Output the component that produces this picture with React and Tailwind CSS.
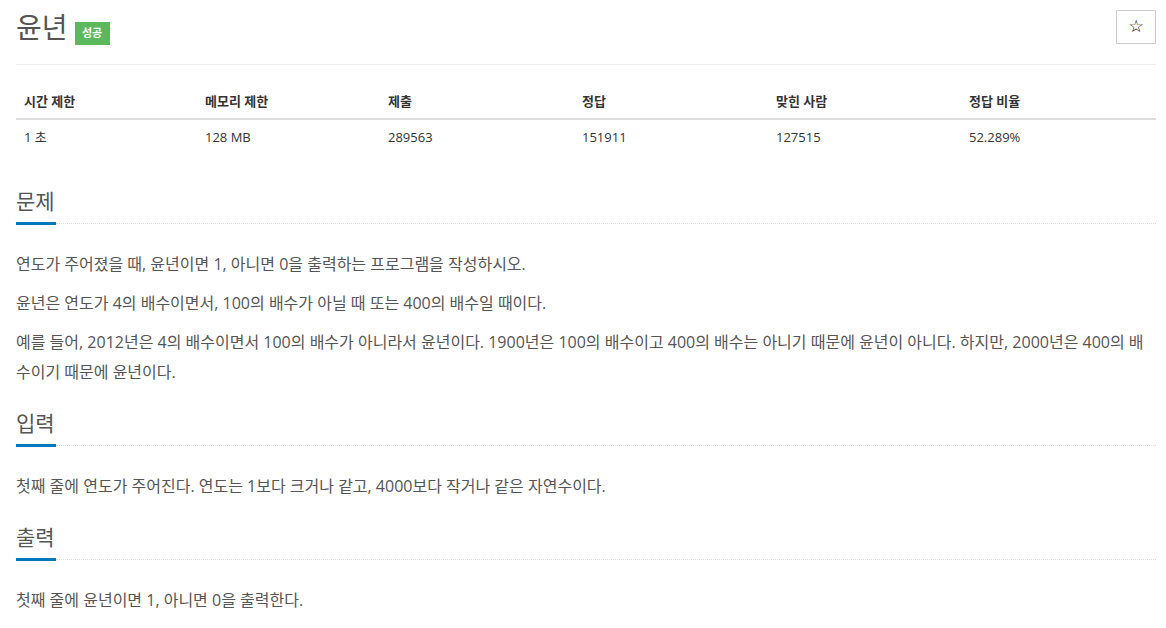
import { useState } from "react";

const limits = [
  { label: "시간 제한", value: "1 초", w: "w-[181px]" },
  { label: "메모리 제한", value: "128 MB", w: "w-[183px]" },
  { label: "제출", value: "289563", w: "w-[194px]" },
  { label: "정답", value: "151911", w: "w-[194px]" },
  { label: "맞힌 사람", value: "127515", w: "w-[193px]" },
  { label: "정답 비율", value: "52.289%", w: "" },
];

// Section title with the short blue bar and dotted rule
const Headline = ({ title }) => (
  <div>
    <h2 className="text-[21px] leading-[30px] text-[#555] pb-[6px]">{title}</h2>
    <div className="flex items-center h-[3px]">
      <div className="w-10 h-[3px] bg-[#0076c0]" />
      <div className="flex-1 border-t border-dotted border-[#ddd]" />
    </div>
  </div>
);

const Section = ({ title, children }) => (
  <section className="mt-3">
    <Headline title={title} />
    <div className="mt-[24px] text-[16px] leading-[30px] text-[#555]">{children}</div>
  </section>
);

export default function App() {
  const [starred, setStarred] = useState(false);

  return (
    <div className="min-h-screen bg-white pl-4 pr-[10px] flex flex-col font-['Open_Sans','Noto_Sans_CJK_KR',sans-serif]">
      {/* page header */}
      <div className="h-[65px] pt-[10px] border-b border-[#eee] flex justify-between items-start">
        <div className="flex items-start">
          <h1 className="text-[28px] leading-[34px] text-[#555]">윤년</h1>
          <span className="ml-[7px] mt-[12px] h-[23px] w-[35px] bg-[#5cb85c] text-white text-[11px] font-bold flex items-center justify-center">
            성공
          </span>
        </div>
        <button
          onClick={() => setStarred(!starred)}
          className="w-10 h-[34px] border border-[#ccc] bg-white flex items-center justify-center text-[17px] text-black font-['DejaVu_Sans',sans-serif]"
        >
          {starred ? "★" : "☆"}
        </button>
      </div>

      {/* limits table */}
      <table className="mt-[19px] mb-5 w-full border-collapse text-[13px] text-[#333]">
        <thead>
          <tr>
            {limits.map((item) => (
              <th
                key={item.label}
                className={`${item.w} text-left font-bold px-2 py-2 leading-[18px] border-b-2 border-[#ddd]`}
              >
                {item.label}
              </th>
            ))}
          </tr>
        </thead>
        <tbody>
          <tr>
            {limits.map((item) => (
              <td key={item.label} className="px-2 py-2 leading-[18px]">
                {item.value}
              </td>
            ))}
          </tr>
        </tbody>
      </table>

      <Section title="문제">
        <p className="mb-[9px]">연도가 주어졌을 때, 윤년이면 1, 아니면 0을 출력하는 프로그램을 작성하시오.</p>
        <p className="mb-[9px]">윤년은 연도가 4의 배수이면서, 100의 배수가 아닐 때 또는 400의 배수일 때이다.</p>
        <p className="mb-[9px]">
          예를 들어, 2012년은 4의 배수이면서 100의 배수가 아니라서 윤년이다. 1900년은 100의 배수이고 400의 배수는 아니기 때문에 윤년이 아니다. 하지만, 2000년은 400의 배수이기 때문에 윤년이다.
        </p>
      </Section>

      <Section title="입력">
        <p className="mb-[9px]">첫째 줄에 연도가 주어진다. 연도는 1보다 크거나 같고, 4000보다 작거나 같은 자연수이다.</p>
      </Section>

      <Section title="출력">
        <p className="mb-[9px]">첫째 줄에 윤년이면 1, 아니면 0을 출력한다.</p>
      </Section>
    </div>
  );
}
